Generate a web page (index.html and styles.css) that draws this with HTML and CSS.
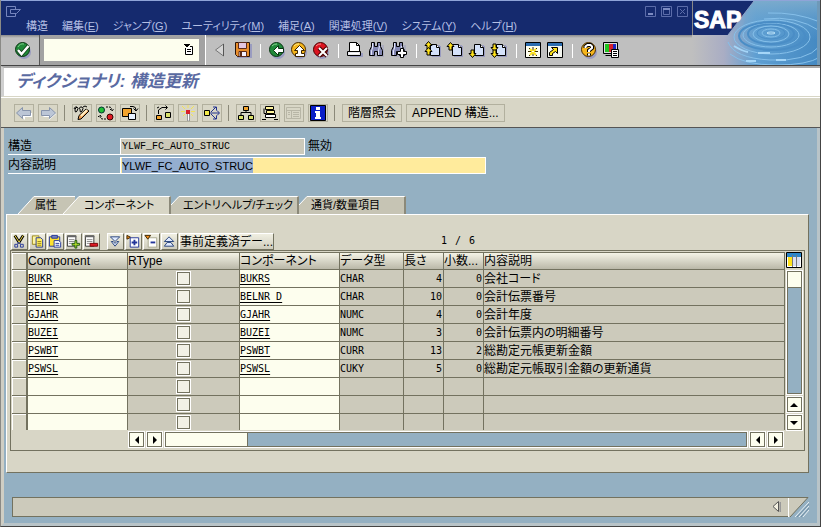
FILE: index.html
```html
<!DOCTYPE html>
<html lang="ja">
<head>
  <meta charset="UTF-8" />
  <meta name="viewport" content="width=device-width, initial-scale=1.0" />
  <title>ディクショナリ: 構造更新</title>
  <link rel="stylesheet" href="styles.css">
</head>
<body>

  <!-- Shared icon shapes -->
  <svg class="defs" width="0" height="0">
    <symbol id="page" viewBox="0 0 18 18">
      <path d="M8 4h8v1h1v11H8z" fill="#9a9cc0"/>
      <path d="M6.500 3.500h6l3 3v8h-9z" fill="#d5e2fa" stroke="#000"/>
      <path d="M12.500 3.500v3h3" fill="#fff" stroke="#000"/>
    </symbol>
    <symbol id="up" viewBox="0 0 9 9">
      <path d="M4.500 .500l3.500 4h-2v3.500h-3v-3.500h-2z" fill="#ffe21a" stroke="#000"/>
    </symbol>
    <symbol id="down" viewBox="0 0 9 9">
      <path d="M4.500 8.500l3.500-4h-2v-3.500h-3v3.500h-2z" fill="#ffe21a" stroke="#000"/>
    </symbol>
    <symbol id="glasses" viewBox="0 0 18 18">
      <path d="M4 4h12v12H4z" fill="#9a9cc0" opacity=".5"/>
      <path d="M3.500 1.500h3v4h3v-4h3v4l2 4v5h-5v-4h-3v4h-5v-5l2-4z" fill="#8488b4" stroke="#000"/>
      <path d="M4.500 2v5l-1 3v4M11.500 5l-1 5v4" stroke="#e4e6fa" fill="none"/>
    </symbol>
    <symbol id="list" viewBox="0 0 16 15">
      <path d="M1.500 1.500h9v11h-9z" fill="#fff" stroke="#333"/>
      <path d="M1 1h10v2H1z" fill="#666"/>
      <path d="M3 5.500h6M3 7.500h6M3 9.500h6" stroke="#888"/>
    </symbol>
  </svg>

  <!-- Header Section -->
  <header class="header">
    <div class="header-main">
      <div class="title-bar">
        <div class="title-top">
          <button class="sys-btn" aria-label="システムメニュー">
            <svg width="16" height="12" viewBox="0 0 16 12"><path d="M9.500 3V.500h-9v10h9V8M4.500 3.500h10l-4 4h-6z" fill="none" stroke="#7585bd"/></svg>
          </button>
          <div class="win-btns">
            <button aria-label="最小化"><svg width="11" height="11"><path d="M.500.500h10v10H.500z" fill="none" stroke="#5b6ca9"/><path d="M3 7h5v2H3z" fill="#7d8cc2"/></svg></button>
            <button aria-label="最大化"><svg width="11" height="11"><path d="M.500.500h10v10H.500zM2.500 3.500h6v5h-6z" fill="none" stroke="#5b6ca9"/><path d="M2 2h7v2H2z" fill="#7d8cc2"/></svg></button>
            <button aria-label="閉じる"><svg width="11" height="11"><path d="M.500.500h10v10H.500zM3 3l5 5M8 3l-5 5" fill="none" stroke="#5b6ca9"/></svg></button>
          </div>
        </div>
        <nav class="menu">
          <a href="#">構造</a>
          <a href="#">編集(<u>E</u>)</a>
          <a href="#">ジャンプ(<u>G</u>)</a>
          <a href="#">ユーティリティ(<u>M</u>)</a>
          <a href="#">補足(<u>A</u>)</a>
          <a href="#">関連処理(<u>V</u>)</a>
          <a href="#">システム(<u>Y</u>)</a>
          <a href="#">ヘルプ(<u>H</u>)</a>
        </nav>
      </div>

      <div class="toolbar">
        <div class="enter-box">
          <button class="icon-btn" aria-label="実行">
            <svg viewBox="0 0 18 18"><circle cx="10" cy="11" r="7" fill="#9a9cc0"/><circle cx="8.500" cy="8.500" r="7" fill="#218a3a" stroke="#0a3512"/><path d="M4 6a5.500 5.500 0 0 1 6-3" stroke="#7fd08c" fill="none"/><path d="M4 9l3.500 4 7-8" fill="none" stroke="#0a3512" stroke-width="4"/><path d="M4 9l3.500 4 7-8" fill="none" stroke="#fff" stroke-width="2.500"/></svg>
          </button>
        </div>
        <div class="command-box">
          <input type="text" aria-label="コマンド">
          <button aria-label="履歴"><svg width="10" height="12" viewBox="0 0 10 12"><path d="M0 0h6v1H5v1H4v1H2V2H1V1H0z"/><path d="M1.500 4v6.500h7V2.500H6" fill="#fff" stroke="#000"/><path d="M3 5.500h4M3 7.500h4" stroke="#000"/></svg></button>
        </div>
        <div class="std-btns">
          <button class="icon-btn narrow" aria-label="折りたたみ"><svg viewBox="0 0 16 18"><path d="M9.500 3v12l-8-6z" fill="#d4d4d4" stroke="#777"/><path d="M9.500 3v12" stroke="#555"/></svg></button>
          <button class="icon-btn" aria-label="保存"><svg viewBox="0 0 18 18"><path d="M3 3h15v14H3z" fill="#9a9cc0"/><path d="M1.500 1.500h14v14h-12l-2-2z" fill="#e88d2c" stroke="#2b1508"/><path d="M4.500 1.500h8v6h-8z" fill="#e3c6e0" stroke="#5a2a1a"/><path d="M5 10.500h7.500v5H5z" fill="#f4f0ff" stroke="#5a2a1a"/><path d="M6 11h2v4H6z" fill="#5a2a1a"/></svg></button>
          <span class="sep"></span>
          <button class="icon-btn" aria-label="戻る"><svg viewBox="0 0 18 18"><circle cx="10" cy="11" r="7" fill="#9a9cc0"/><circle cx="8.500" cy="8.500" r="7" fill="#218a3a" stroke="#0a3512"/><path d="M4 5a5.500 5.500 0 0 1 5-2" stroke="#8ad892" fill="none"/><path d="M5.500 9.500l5-5v3h5v4h-5v3z" fill="#fff" stroke="#0a3512"/></svg></button>
          <button class="icon-btn" aria-label="終了"><svg viewBox="0 0 18 18"><circle cx="10" cy="11" r="7" fill="#9a9cc0"/><circle cx="8.500" cy="8.500" r="7" fill="#f5b51c" stroke="#4a2c00"/><path d="M4 5a5.500 5.500 0 0 1 5-2" stroke="#ffeb8a" fill="none"/><path d="M9.500 4.500l5 5h-3v3h3v3h-9v-3h2v-3h-3z" fill="#fff" stroke="#3a2400"/></svg></button>
          <button class="icon-btn" aria-label="中止"><svg viewBox="0 0 18 18"><circle cx="10" cy="11" r="7" fill="#9a9cc0"/><circle cx="8.500" cy="8.500" r="7" fill="#dc1420" stroke="#4a0000"/><path d="M4 5a5.500 5.500 0 0 1 5-2" stroke="#ff8a8a" fill="none"/><path d="M7 7l8 8M15 7l-8 8" stroke="#400" stroke-width="4"/><path d="M7 7l8 8M15 7l-8 8" stroke="#fff" stroke-width="2"/></svg></button>
          <span class="sep"></span>
          <button class="icon-btn" aria-label="印刷"><svg viewBox="0 0 18 18"><path d="M4 12h13v4H4z" fill="#9a9cc0"/><path d="M3.500 10.500v-9h7l3 3v6z" fill="#fff" stroke="#000"/><path d="M10.500 1.500v3h3" fill="none" stroke="#000"/><path d="M1.500 10.500h13v4h-13z" fill="#e8e8ee" stroke="#000"/><path d="M3 12.500h10" stroke="#fff"/></svg></button>
          <button class="icon-btn" aria-label="検索"><svg viewBox="0 0 18 18"><use href="#glasses" width="18" height="18"/></svg></button>
          <button class="icon-btn" aria-label="次検索"><svg viewBox="0 0 18 18"><use href="#glasses" width="18" height="18"/><path d="M10.500 7.500h3v3h3v3h-3v3h-3v-3h-3v-3h3z" fill="#fff" stroke="#000"/></svg></button>
          <span class="sep"></span>
          <button class="icon-btn" aria-label="先頭ページ"><svg viewBox="0 0 18 18"><use href="#page" width="18" height="18"/><use href="#up" x="0" y="0" width="9" height="9"/><use href="#up" x="0" y="6" width="9" height="9"/></svg></button>
          <button class="icon-btn" aria-label="前ページ"><svg viewBox="0 0 18 18"><use href="#page" width="18" height="18"/><use href="#up" x="0" y="1" width="9" height="9"/></svg></button>
          <button class="icon-btn" aria-label="次ページ"><svg viewBox="0 0 18 18"><use href="#page" width="18" height="18"/><use href="#down" x="0" y="8" width="9" height="9"/></svg></button>
          <button class="icon-btn" aria-label="最終ページ"><svg viewBox="0 0 18 18"><use href="#page" width="18" height="18"/><use href="#down" x="0" y="2" width="9" height="9"/><use href="#down" x="0" y="8" width="9" height="9"/></svg></button>
          <span class="sep"></span>
          <button class="icon-btn" aria-label="新規セッション"><svg viewBox="0 0 18 18"><path d="M1.500 1.500h15v15h-15z" fill="#fffff0" stroke="#000"/><path d="M2 2h14v3H2z" fill="#2c6db0"/><path d="M9 6v9M4 10.500h10M5 7l8 8M13 7l-8 8" stroke="#3a3000"/><path d="M6 8l6 6M12 8l-6 6" stroke="#ffe21a" stroke-width="2"/><path d="M8 10h2v1H8z" fill="#fff"/></svg></button>
          <button class="icon-btn" aria-label="ショートカット"><svg viewBox="0 0 18 18"><path d="M1.500 1.500h15v15h-15z" fill="#f4f6f0" stroke="#000"/><path d="M2 2h14v3H2z" fill="#2c6db0"/><path d="M3.500 14.500v-3l4-3-2-2h6v6l-2-2-3 2v2z" fill="#ffe21a" stroke="#000"/></svg></button>
          <span class="sep"></span>
          <button class="icon-btn" aria-label="ヘルプ"><svg viewBox="0 0 18 18"><circle cx="10" cy="11" r="7" fill="#9a9cc0"/><circle cx="8.500" cy="8.500" r="7" fill="#f5b51c" stroke="#4a2c00"/><path d="M5.500 7V5.500l2-1.500h3l1.500 1.500V7L9 9.500V11M9 12.500v2" fill="none" stroke="#000" stroke-width="4"/><path d="M5.500 7V5.500l2-1.500h3l1.500 1.500V7L9 9.500V11M9 12.500v2" fill="none" stroke="#fff" stroke-width="2"/></svg></button>
          <button class="icon-btn" aria-label="レイアウト調整"><svg viewBox="0 0 18 18"><path d="M1.500 1.500h14v11h-14z" fill="#ddd" stroke="#000"/><path d="M3 3h4v8H3z" fill="#1ec31e"/><path d="M7 3h4v8H7z" fill="#d8202a"/><path d="M11 3h3v8h-3z" fill="#1c28c0"/><path d="M3.500 14.500h6" stroke="#000"/><path d="M9.500 8.500h7v8h-7z" fill="#fff" stroke="#000"/><path d="M11 10.500h4M11 12.500h4M11 14.500h4" stroke="#000"/></svg></button>
        </div>
      </div>
    </div>

    <svg class="brand" width="128" height="66" viewBox="0 0 128 66">
      <defs>
        <linearGradient id="fade"><stop offset="0" stop-color="#bfbfbf"/><stop offset=".25" stop-color="#a9adc4"/><stop offset=".5" stop-color="#5f9fd2"/><stop offset="1" stop-color="#4489c2"/></linearGradient>
        <linearGradient id="sky" x2="0" y2="1"><stop offset="0" stop-color="#7eaccc" stop-opacity=".9"/><stop offset=".6" stop-color="#5a9ed4" stop-opacity="0"/></linearGradient>
      </defs>
      <rect width="128" height="66" fill="url(#fade)"/>
      <path d="M60 1h68v65H36z" fill="url(#sky)"/>
      <g fill="none" stroke="#86c0ea">
        <ellipse cx="79" cy="33" rx="4" ry="1" stroke="#b9e0f8"/>
        <ellipse cx="79" cy="33" rx="9" ry="4"/>
        <ellipse cx="79" cy="33" rx="14" ry="6" stroke="#4a8dc6"/>
        <ellipse cx="79" cy="34" rx="18" ry="8"/>
        <ellipse cx="79" cy="34" rx="23" ry="10" stroke="#4a8dc6" stroke-width="2"/>
        <ellipse cx="79" cy="35" rx="28" ry="12"/>
        <ellipse cx="80" cy="36" rx="33" ry="14" stroke="#4a8dc6" stroke-width="2"/>
        <ellipse cx="80" cy="37" rx="38" ry="17"/>
        <path d="M36 42q6 16 42 18t50-14M38 54q14 11 46 11t44-8M72 19q32-4 56 12M76 13q28-1 52 9"/>
        <path d="M42 46q8 5 14 6M66 53h12M54 61h10M84 60h10" stroke="#a5d6f8" stroke-width="2"/>
      </g>
      <path d="M125 1h3v65h-3z" fill="#6f99b8"/>
      <path d="M0 1h62L36 35H0z" fill="#152a6e"/>
      <path d="M0 0h128v1H0z" fill="#8fa4d8"/>
      <path d="M0 1h1v34H0z" fill="#888"/>
      <path d="M62 1L36 35" stroke="#8fa4c8"/>
      <path d="M0 65h128v1H0z" fill="#444"/>
      <text x="2" y="28" class="logo-text">SAP</text>
    </svg>
  </header>

  <div class="page-title"><h1>ディクショナリ: 構造更新</h1></div>

  <!-- Application toolbar -->
  <div class="app-bar">
    <button class="app-btn off" aria-label="前"><svg viewBox="0 0 18 16"><path d="M4 9l6 6v-3h7V8h-2z" fill="#fff"/><path d="M1.500 8l6-5.500v3h8v5h-8v3z" fill="#bcc6d6" stroke="#8794ac"/></svg></button>
    <button class="app-btn off" aria-label="次"><svg viewBox="0 0 18 16"><path d="M3 12h7v3l7-6-2-2z" fill="#fff"/><path d="M16.500 8l-6-5.500v3h-8v5h8v3z" fill="#bcc6d6" stroke="#8794ac"/></svg></button>
    <span class="sep dark"></span>
    <button class="app-btn" aria-label="照会/変更"><svg viewBox="0 0 18 16"><path d="M1 4q1-3 3-2t0 4-2-2l2-2M6 4q1-3 3-2t0 4-2-2M10 2q2-2 4 0" fill="none" stroke="#000"/><path d="M5 14.500l1-4 7-6.500 3 2-8 8z" fill="#f2a052" stroke="#000"/><path d="M8 11l6-6" stroke="#fff1c8" stroke-width="2"/></svg></button>
    <button class="app-btn" aria-label="有効/無効"><svg viewBox="0 0 18 16"><circle cx="4.500" cy="5" r="3" fill="#20c035" stroke="#033"/><circle cx="13" cy="12" r="3" fill="#e01a24" stroke="#300"/><path d="M9 2h3q3 0 3 4M13 4l2 2 2-2M9 14H6q-3 0-3-3M1 12l2-2 2 2" fill="none" stroke="#000" stroke-dasharray="2 1"/></svg></button>
    <button class="app-btn" aria-label="他オブジェクト"><svg viewBox="0 0 18 16"><path d="M1.500 3.500h9v8h-9z" fill="#f0a22c" stroke="#000"/><path d="M7.500 8.500h7v6h-7z" fill="#eaf3ff" stroke="#000"/><path d="M9 1.500h3q3 0 3 4M12.500 3.500l2.500 2.500 2-2.500" fill="none" stroke="#000"/></svg></button>
    <span class="sep dark"></span>
    <button class="app-btn" aria-label="チェック"><svg viewBox="0 0 18 16"><path d="M1.500 10.500h5v4h-5z" fill="#f0a22c" stroke="#000"/><path d="M10.500 7.500h5v5h-5z" fill="#d9e06a" stroke="#000"/><path d="M3.500 9V5L7 2.500h5M4 2l-2 1M10.500 .500l2 2-2 2" fill="none" stroke="#000"/></svg></button>
    <button class="app-btn" aria-label="有効化"><svg viewBox="0 0 18 16"><path d="M9 0v3M3 1l3 3M15 1l-3 3M2 6.500h4M12 6.500h4M4 11l2-2M14 11l-2-2" stroke="#f4e356"/><path d="M8.500 6h2v10h-2z" fill="#fff" stroke="#999"/><path d="M7 5h4v4H7z" fill="#d8202a"/></svg></button>
    <button class="app-btn" aria-label="使用先一覧"><svg viewBox="0 0 18 16"><path d="M1.500 5.500h5v5h-5z" fill="#f3ea4a" stroke="#000"/><path d="M7 8h9M8 7l5-5M8 9l5 5M10 2h3.500v3.500M10 14h3.500v-3.500M14 5.500l2.500 2.500-2.500 2.500" fill="none" stroke="#22328e"/></svg></button>
    <span class="sep dark"></span>
    <button class="app-btn" aria-label="階層"><svg viewBox="0 0 18 16"><path d="M6.500 1.500h5v4h-5z" fill="#f0a22c" stroke="#000"/><path d="M1.500 10.500h5v4h-5zM11.500 10.500h5v4h-5z" fill="#d9e06a" stroke="#000"/><path d="M9 6v2M4 10V7.500h10V10" fill="none" stroke="#000"/></svg></button>
    <button class="app-btn" aria-label="追加"><svg viewBox="0 0 18 16"><path d="M4.500 1.500h8v3h-8zM5.500 5.500h8v3h-8z" fill="#fff49a" stroke="#000"/><path d="M4.500 9.500h10v3h-10z" fill="#fff" stroke="#000"/><path d="M3 3.500v5h2M1 14.500h4M13 14.500h4" fill="none" stroke="#000"/></svg></button>
    <button class="app-btn off" aria-label="内容"><svg viewBox="0 0 18 16"><path d="M1.500 2.500h14v11h-14zM2 5.500h13M6.500 5v8M8 7.500h6M8 9.500h6M8 11.500h6M3 7.500h2M3 9.500h2" fill="none" stroke="#b8b6a6"/></svg></button>
    <button class="app-btn" aria-label="情報"><svg viewBox="0 0 18 16"><path d="M1.500 .500h15v15h-15z" fill="#0a1ec8" stroke="#000"/><path d="M7 2h4v3H7zM6 6h5v6h1v2H6v-2h1V8H6z" fill="#fff"/></svg></button>
    <span class="sep dark"></span>
    <button class="app-btn text">階層照会</button>
    <button class="app-btn text">APPEND 構造...</button>
  </div>

  <main class="work-area">
    <form class="fields">
      <label for="struct">構造</label>
      <div class="field-line">
        <input id="struct" class="readonly" type="text" value="YLWF_FC_AUTO_STRUC" readonly>
        <span>無効</span>
      </div>
      <label for="desc">内容説明</label>
      <div class="field-line">
        <div class="edit-box">
          <input id="desc" type="text" value="YLWF_FC_AUTO_STRUC">
        </div>
      </div>
    </form>

    <div class="tabs">
      <button class="tab"><svg width="17" height="18" viewBox="0 0 17 18"><path d="M0 18L16 0h1v18z" fill="#c6c4b4"/><path d="M0 18L16 .500h1" fill="none" stroke="#fff"/></svg><span>属性</span></button>
      <button class="tab active"><svg width="17" height="18" viewBox="0 0 17 18"><path d="M0 18L16 0h1v18z" fill="#d8d6c6"/><path d="M0 18L16 .500h1" fill="none" stroke="#fff"/></svg><span>コンポーネント</span></button>
      <button class="tab tab-help"><svg width="9" height="18" viewBox="0 0 9 18"><path d="M0 18V9L8 0h1v18z" fill="#c6c4b4"/><path d="M0 9L8 .500h1" fill="none" stroke="#fff"/></svg><span>エントリヘルプ/チェック</span></button>
      <button class="tab tab-currency"><svg width="9" height="18" viewBox="0 0 9 18"><path d="M0 18V9L8 0h1v18z" fill="#c6c4b4"/><path d="M0 9L8 .500h1" fill="none" stroke="#fff"/></svg><span>通貨/数量項目</span></button>
    </div>

    <section class="panel">
      <div class="grid-bar">
        <button class="grid-btn" aria-label="切り取り"><svg viewBox="0 0 16 15"><path d="M3 1l5 8M12 1L7 9" stroke="#000" stroke-width="3"/><path d="M3 1l5 8M12 1L7 9" stroke="#ffe64a"/><path d="M3 10.500h3v3H3zM9 10.500h3v3H9zM6 10l1-2 2 2" fill="none" stroke="#24369a"/></svg></button>
        <button class="grid-btn" aria-label="コピー"><svg viewBox="0 0 16 15"><path d="M2.500 1.500h7v9h-7z" fill="#fff6a0" stroke="#97861c"/><path d="M6.500 3.500h5l2 2v8h-7z" fill="#ffef62" stroke="#24369a"/><path d="M8 7.500h4M8 9.500h4M8 11.500h4" stroke="#97861c"/></svg></button>
        <button class="grid-btn" aria-label="貼り付け"><svg viewBox="0 0 16 15"><path d="M1.500 2.500h11v10h-11z" fill="#ffe12e" stroke="#24369a"/><path d="M4 1h6v3H4z" fill="#7885b8" stroke="#24369a"/><path d="M6.500 6.500h5l2 2v5h-7z" fill="#fff" stroke="#24369a"/><path d="M8 9.500h4M8 11.500h4" stroke="#24369a"/></svg></button>
        <button class="grid-btn" aria-label="行挿入"><svg viewBox="0 0 16 15"><use href="#list" width="16" height="15"/><path d="M9.500 6.500h2v3h3v2h-3v3h-2v-3h-3v-2h3z" fill="#b4dc2a" stroke="#1f5a10"/></svg></button>
        <button class="grid-btn" aria-label="行削除"><svg viewBox="0 0 16 15"><use href="#list" width="16" height="15"/><path d="M6.500 9.500h8v3h-8z" fill="#e01a24" stroke="#7a0408"/></svg></button>
        <button class="grid-btn gap" aria-label="展開"><svg viewBox="0 0 16 15"><path d="M2.500 2.500h10l-5 5zM3.500 7.500h2l2 2 2-2h2l-4 5z" fill="#dfeaff" stroke="#24407a"/></svg></button>
        <button class="grid-btn" aria-label="インクルード展開"><svg viewBox="0 0 16 15"><path d="M1 1v4l4-2z" fill="#f08a1c" stroke="#3a2400"/><path d="M4.500 3.500h9v10h-9z" fill="#fff" stroke="#24369a"/><path d="M6 8.500h6M9 5.500v6" stroke="#24369a" stroke-width="2"/></svg></button>
        <button class="grid-btn" aria-label="インクルード縮小"><svg viewBox="0 0 16 15"><path d="M4.500 3.500h9v10h-9z" fill="#fff" stroke="#a9a98f"/><path d="M1 1h6L4 5z" fill="#f08a1c" stroke="#3a2400"/><path d="M7 8.500h5" stroke="#24369a" stroke-width="2"/></svg></button>
        <button class="grid-btn" aria-label="縮小"><svg viewBox="0 0 16 15"><path d="M2.500 7.500l5-5 5 5zM2.500 12.500l3-4h4l3 4z" fill="#dfeaff" stroke="#24407a"/></svg></button>
        <button class="grid-btn text">事前定義済デー...</button>
        <div class="counter mono"><span>1</span><span>/</span><span>6</span></div>
      </div>

      <div class="grid-box">
        <table>
          <colgroup>
            <col class="c-sel"><col class="c-name"><col class="c-rtype"><col class="c-name"><col class="c-type"><col class="c-num"><col class="c-num"><col>
          </colgroup>
          <thead>
            <tr><th class="sel"></th><th>Component</th><th>RType</th><th>コンポーネント</th><th>データ型</th><th>長さ</th><th>小数...</th><th>内容説明</th></tr>
          </thead>
          <tbody>
            <tr><td class="sel"></td><td class="edit"><a href="#">BUKR</a></td><td class="chk"><input type="checkbox" aria-label="RType 1"></td><td class="edit"><a href="#">BUKRS</a></td><td class="mono">CHAR</td><td class="num">4</td><td class="num">0</td><td>会社コード</td></tr>
            <tr><td class="sel"></td><td class="edit"><a href="#">BELNR</a></td><td class="chk"><input type="checkbox" aria-label="RType 2"></td><td class="edit"><a href="#">BELNR_D</a></td><td class="mono">CHAR</td><td class="num">10</td><td class="num">0</td><td>会計伝票番号</td></tr>
            <tr><td class="sel"></td><td class="edit"><a href="#">GJAHR</a></td><td class="chk"><input type="checkbox" aria-label="RType 3"></td><td class="edit"><a href="#">GJAHR</a></td><td class="mono">NUMC</td><td class="num">4</td><td class="num">0</td><td>会計年度</td></tr>
            <tr><td class="sel"></td><td class="edit"><a href="#">BUZEI</a></td><td class="chk"><input type="checkbox" aria-label="RType 4"></td><td class="edit"><a href="#">BUZEI</a></td><td class="mono">NUMC</td><td class="num">3</td><td class="num">0</td><td>会計伝票内の明細番号</td></tr>
            <tr><td class="sel"></td><td class="edit"><a href="#">PSWBT</a></td><td class="chk"><input type="checkbox" aria-label="RType 5"></td><td class="edit"><a href="#">PSWBT</a></td><td class="mono">CURR</td><td class="num">13</td><td class="num">2</td><td>総勘定元帳更新金額</td></tr>
            <tr><td class="sel"></td><td class="edit"><a href="#">PSWSL</a></td><td class="chk"><input type="checkbox" aria-label="RType 6"></td><td class="edit"><a href="#">PSWSL</a></td><td class="mono">CUKY</td><td class="num">5</td><td class="num">0</td><td>総勘定元帳取引金額の更新通貨</td></tr>
            <tr><td class="sel"></td><td class="edit"></td><td class="chk"><input type="checkbox" aria-label="RType 7"></td><td class="edit"></td><td></td><td></td><td></td><td></td></tr>
            <tr><td class="sel"></td><td class="edit"></td><td class="chk"><input type="checkbox" aria-label="RType 8"></td><td class="edit"></td><td></td><td></td><td></td><td></td></tr>
            <tr><td class="sel"></td><td class="edit"></td><td class="chk"><input type="checkbox" aria-label="RType 9"></td><td class="edit"></td><td></td><td></td><td></td><td></td></tr>
          </tbody>
        </table>

        <div class="v-scroll">
          <button class="config" aria-label="テーブル設定"><svg width="16" height="16"><path d="M.500.500h15v15H.500z" fill="#fff" stroke="#000"/><path d="M1 1h14v4H1z" fill="#2c86c8"/><path d="M2 5h4v9H2z" fill="#ffe21a"/><path d="M7 5h3v9H7zM11 5h3v9h-3z" fill="#dcdff0"/><path d="M6.500 3v12M10.500 3v12" stroke="#777"/></svg></button>
          <div class="v-track"><div class="v-thumb"></div></div>
          <button class="arrow" aria-label="上へ"><svg width="8" height="8"><path d="M4 2l4 4H0z"/></svg></button>
          <button class="arrow" aria-label="下へ"><svg width="8" height="8"><path d="M4 6l4-4H0z"/></svg></button>
        </div>

        <div class="h-scroll">
          <button class="arrow" aria-label="左端へ"><svg width="8" height="8"><path d="M2 4l4-4v8z"/></svg></button>
          <button class="arrow" aria-label="右へ"><svg width="8" height="8"><path d="M6 4L2 0v8z"/></svg></button>
          <div class="h-track"><div class="h-thumb"></div></div>
          <button class="arrow" aria-label="左へ"><svg width="8" height="8"><path d="M2 4l4-4v8z"/></svg></button>
          <button class="arrow" aria-label="右端へ"><svg width="8" height="8"><path d="M6 4L2 0v8z"/></svg></button>
        </div>
      </div>
    </section>

    <footer class="status">
      <div class="status-text">
        <button aria-label="ステータス"><svg width="10" height="14" viewBox="0 0 10 14"><path d="M7.500 2v10H9V2z" fill="#999"/><path d="M6.500 1.500v10L1 6.500z" fill="#f2f0e0" stroke="#555"/></svg></button>
      </div>
      <svg width="21" height="20" viewBox="0 0 21 20"><path d="M0 0h20L2 20H0z" fill="#cccabb"/><path d="M.500 20V0" stroke="#fff"/><path d="M0 .500h20L2 20" fill="none" stroke="#73725f"/><path d="M7 20L21 5M11 20L21 9M15 20l6-7" stroke="#e8f0f4"/><path d="M9 20L21 7M13 20l8-9" stroke="#6f8ea4"/></svg>
    </footer>
  </main>

  <script>
    // Start with the description selected
    document.getElementById("desc").focus();
    document.getElementById("desc").select();
  </script>
</body>
</html>
```
FILE: styles.css
```css
* {
  box-sizing: border-box;
}

body {
  margin: 0;
  min-height: 100vh;
  display: flex;
  flex-direction: column;
  font-family: "Liberation Sans", "Noto Sans CJK JP", sans-serif;
  font-size: 12px;
  line-height: 16px;
  font-feature-settings: "palt";
  color: #000;
  background-color: #94b0c2;
  border-left: 1px solid #8a8a86;
  border-right: 1px solid #444;
  border-bottom: 1px solid #444;
}

button {
  display: flex;
  align-items: center;
  justify-content: center;
  padding: 0;
  border: none;
  background: none;
  font: inherit;
  font-feature-settings: inherit;
  color: inherit;
  white-space: nowrap;
}

input {
  margin: 0;
  padding: 0;
  border: none;
  outline: none;
  border-radius: 0;
  font: inherit;
  color: inherit;
}

svg {
  display: block;
}

.defs {
  position: absolute;
}

.mono {
  font-family: "DejaVu Sans Mono", "Noto Sans CJK JP", monospace;
  font-size: 10px;
}

/* Header */
.header {
  display: flex;
}

.header-main {
  flex: 1;
  min-width: 0;
}

.brand {
  flex: none;
}

.logo-text {
  font-family: "Liberation Sans", sans-serif;
  font-size: 23px;
  font-weight: bold;
  fill: #fff;
  stroke: #fff;
}

.title-bar {
  height: 35px;
  padding: 4px 4px 0 5px;
  background-color: #152a6e;
  border-top: 1px solid #8fa4d8;
}

.title-top {
  display: flex;
  justify-content: space-between;
  height: 13px;
}

.win-btns {
  display: flex;
  gap: 5px;
}

.menu {
  display: flex;
  gap: 14px;
  padding-left: 20px;
  font-size: 11px;
  white-space: nowrap;
}

.menu a {
  color: #b4bfe4;
  text-decoration: none;
}

.toolbar {
  display: flex;
  height: 31px;
  background: linear-gradient(#8a8a8a, #bfbfbf 3px);
  border-bottom: 1px solid #444;
}

.enter-box {
  width: 39px;
  padding: 6px 0 0 13px;
  border-right: 1px solid #555;
}

.command-box {
  display: flex;
  align-items: center;
  width: 166px;
  padding: 4px 6px 4px 4px;
  background-color: #a2a2a2;
  border-right: 1px solid #fff;
}

.command-box input {
  flex: 1;
  min-width: 0;
  height: 22px;
  padding-left: 4px;
  background-color: #fdfeee;
}

.command-box button {
  width: 20px;
  height: 22px;
  background-color: #fdfeee;
}

.std-btns {
  display: flex;
  gap: 4px;
  padding: 6px 0 0 8px;
}

.icon-btn,
.icon-btn svg {
  width: 18px;
  height: 18px;
}

.narrow,
.narrow svg {
  width: 16px;
}

.sep {
  width: 8px;
  height: 14px;
  margin-top: 3px;
  background: linear-gradient(#fff, #fff) 4px 0 / 1px 100% no-repeat;
}

.sep.dark {
  width: 6px;
  margin: 1px 0 0;
  height: 16px;
  background-image: linear-gradient(#8b8979, #8b8979);
  background-position: 2px 0;
}

/* Title and application toolbar */
.page-title {
  height: 31px;
  padding: 4px 0 0 12px;
  background-color: #fff;
  border-top: 2px solid #a8a8a8;
  border-left: 3px solid #d0d0d0;
  border-bottom: 1px solid #d8d6c6;
}

.page-title h1 {
  margin: 0;
  font-size: 17px;
  line-height: 20px;
  font-style: italic;
  font-weight: bold;
  color: #5a6aa2;
}

.app-bar {
  display: flex;
  gap: 4px;
  height: 31px;
  padding: 6px 0 0 13px;
  background-color: #d8d6c6;
  border-top: 1px solid #fff;
  border-bottom: 1px solid #555;
}

.app-btn {
  width: 20px;
  height: 18px;
  border: 1px solid #b2b09e;
}

.app-btn svg {
  width: 18px;
  height: 16px;
}

.app-btn.text {
  width: auto;
  padding: 0 5px;
}

/* Work area */
.work-area {
  flex: 1;
  display: flex;
  flex-direction: column;
  padding: 10px 8px 6px 2px;
  border-left: 3px solid #cfcec4;
  border-right: 3px solid #b9c4c8;
  border-bottom: 3px solid #b9c4c8;
}

.fields {
  display: grid;
  grid-template-columns: 112px 1fr;
  row-gap: 2px;
  margin: 0 0 22px 2px;
}

.fields label {
  height: 17px;
  border-bottom: 1px solid #fff;
}

.field-line {
  display: flex;
  gap: 3px;
  height: 17px;
}

.readonly {
  width: 185px;
  height: 17px;
  padding-left: 1px;
  font-family: "Liberation Mono", monospace;
  font-size: 10px;
  background-color: #cccabb;
  border: 1px solid #fff;
}

.edit-box {
  width: 366px;
  background-color: #ffeb9c;
  border: 1px solid #fff;
}

.edit-box input {
  display: block;
  width: 100%;
  height: 15px;
  padding-left: 1px;
  font-size: 11px;
  background: none;
}

.edit-box input::selection {
  background-color: #94aed0;
  color: #000;
}

.tabs {
  display: flex;
  padding-left: 12px;
  font-size: 11px;
}

.tab {
  height: 18px;
}

.tab span {
  flex: 1;
  height: 18px;
  padding-left: 3px;
  line-height: 16px;
  text-align: left;
  background-color: #c6c4b4;
  border-top: 1px solid #fff;
  border-right: 2px solid #8b8979;
}

.tab:first-child span {
  padding: 0 18px 0 0;
  border-right: none;
}

.tab.active {
  position: relative;
  width: 108px;
  margin: 0 0 -1px -12px;
}

.tab.active span {
  padding-left: 4px;
  background-color: #d8d6c6;
}

.tab-help {
  width: 128px;
}

.tab-currency {
  width: 107px;
}

.panel {
  padding: 18px 3px 21px;
  background-color: #d8d6c6;
  border: 1px solid #73725f;
  border-top-color: #fff;
  border-left-color: #fff;
}

.grid-bar {
  display: flex;
  gap: 1px;
  height: 17px;
  padding-left: 1px;
}

.grid-btn {
  width: 17px;
  height: 17px;
  border: 1px solid #73725f;
  border-top-color: #fff;
  border-left-color: #fff;
  background: linear-gradient(#f0efe2, #cfcdbd);
}

.grid-btn svg {
  width: 15px;
  height: 15px;
}

.grid-btn.gap {
  margin-left: 6px;
}

.grid-btn.text {
  width: 95px;
}

.counter {
  display: flex;
  gap: 8px;
  margin-left: 166px;
}

/* Component table */
.grid-box {
  display: grid;
  grid-template-columns: 1fr 18px;
  padding: 1px;
  border: 1px solid #73725f;
}

table {
  width: 100%;
  table-layout: fixed;
  border-collapse: separate;
  border-spacing: 0;
}

.c-sel {
  width: 16px;
}

.c-name {
  width: 100px;
}

.c-rtype {
  width: 112px;
}

.c-type {
  width: 64px;
}

.c-num {
  width: 40px;
}

th,
td {
  height: 18px;
  padding: 0;
  line-height: 16px;
  text-align: left;
  font-weight: normal;
  white-space: nowrap;
  overflow: hidden;
  border-right: 1px solid #73725f;
  border-bottom: 1px solid #73725f;
}

th {
  background: linear-gradient(#f4f3e6, #bab8a8);
  border-top: 1px solid #73725f;
}

td {
  background-color: #cccabb;
}

tbody tr:last-child td {
  height: 16px;
  border-bottom: none;
}

td.sel,
th.sel {
  background: #d8d6c6;
  border-right-width: 2px;
  box-shadow: inset 1px 1px #fff;
}

.edit {
  background-color: #fdfeee;
}

.edit a {
  color: #000;
  text-underline-offset: 2px;
  text-decoration-skip-ink: none;
}

td.mono,
.edit,
.num {
  font-family: "DejaVu Sans Mono", monospace;
  font-size: 10px;
}

.num {
  padding-right: 1px;
  text-align: right;
}

.chk input {
  appearance: none;
  display: block;
  width: 13px;
  height: 13px;
  margin: 0 auto;
  background-color: #f2f1e6;
  border: 1px solid #73725f;
  box-shadow: 0 0 0 1px #fff;
}

/* Scrollbars */
.v-scroll {
  display: flex;
  flex-direction: column;
  align-items: center;
  gap: 3px;
}

.arrow {
  width: 15px;
  height: 15px;
  flex: none;
  background-color: #fdfeee;
  border: 1px solid #73725f;
  box-shadow: 0 0 0 1px #fff;
}

.v-track {
  flex: 1;
  width: 15px;
  background-color: #94b0c2;
  border: 1px solid #73725f;
  box-shadow: 0 0 0 1px #fff;
}

.v-thumb {
  height: 16px;
  background-color: #fdfeee;
  border-bottom: 1px solid #73725f;
}

.h-scroll {
  display: flex;
  gap: 3px;
  height: 19px;
  padding: 2px 2px 0 0;
  margin-left: 117px;
}

.h-track {
  flex: 1;
  height: 15px;
  background-color: #94b0c2;
  border: 1px solid #73725f;
  box-shadow: 0 0 0 1px #fff;
}

.h-thumb {
  width: 82px;
  height: 13px;
  background-color: #fdfeee;
  border-right: 1px solid #73725f;
}

/* Status bar */
.status {
  display: flex;
  margin: auto 0 0 6px;
}

.status-text {
  flex: 1;
  display: flex;
  align-items: center;
  justify-content: flex-end;
  height: 20px;
  padding-right: 6px;
  background-color: #cccabb;
  border: 1px solid #73725f;
  border-right: none;
}
```
